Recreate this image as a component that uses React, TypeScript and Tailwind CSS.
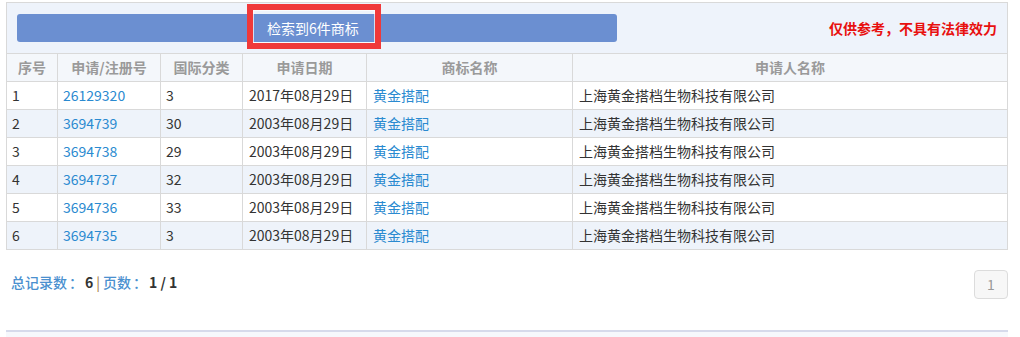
import { memo } from "react"

const rows = [
  { no: 1, reg: "26129320", cls: "3", date: "2017年08月29日" },
  { no: 2, reg: "3694739", cls: "30", date: "2003年08月29日" },
  { no: 3, reg: "3694738", cls: "29", date: "2003年08月29日" },
  { no: 4, reg: "3694737", cls: "32", date: "2003年08月29日" },
  { no: 5, reg: "3694736", cls: "33", date: "2003年08月29日" },
  { no: 6, reg: "3694735", cls: "3", date: "2003年08月29日" },
]

const heads = ["序号", "申请/注册号", "国际分类", "申请日期", "商标名称", "申请人名称"]

const ResultTable = memo(function ResultTable() {
  return (
    <table className="w-full table-fixed border-collapse text-[14px]">
      <colgroup>
        <col className="w-[51px]" />
        <col className="w-[103px]" />
        <col className="w-[82px]" />
        <col className="w-[124px]" />
        <col className="w-[206px]" />
        <col />
      </colgroup>
      <thead>
        <tr className="h-[28px] bg-[#f4f7fb]">
          {heads.map((h) => (
            <th key={h} className="border border-[#d9d9d9] px-[5px] text-center font-bold text-[#9a9a9a]">
              {h}
            </th>
          ))}
        </tr>
      </thead>
      <tbody>
        {rows.map((r) => (
          <tr key={r.no} className={`h-[28px] ${r.no % 2 === 0 ? "bg-[#eef3fa]" : "bg-white"}`}>
            <td className="border border-[#d9d9d9] px-[5px] text-[#333]">{r.no}</td>
            <td className="border border-[#d9d9d9] px-[5px] text-[#2a8ad0]">{r.reg}</td>
            <td className="border border-[#d9d9d9] px-[5px] text-[#333]">{r.cls}</td>
            <td className="border border-[#d9d9d9] px-[6px] text-[#333]">{r.date}</td>
            <td className="border border-[#d9d9d9] px-[6px] text-[#2a8ad0]">黄金搭配</td>
            <td className="border border-[#d9d9d9] px-[6px] text-[#333]">上海黄金搭档生物科技有限公司</td>
          </tr>
        ))}
      </tbody>
    </table>
  )
})

export default function App() {
  return (
    <div className="h-[337px] w-[1020px] overflow-hidden bg-white pl-[6px] pt-[2px] font-['Noto_Sans_CJK_SC',sans-serif]">
      <div className="w-[1002px]">
        <div className="relative flex h-[51px] items-center justify-between border-x border-t border-[#d9d9d9] bg-[#eef3fb] pl-[10px] pr-[10px]">
          <div className="flex h-[28px] w-[600px] items-center rounded-[3px] bg-[#6b8fd1]">
            <span className="ml-[250px] text-[14px] text-white">检索到6件商标</span>
          </div>
          <span className="text-[14px] font-bold text-[#e8100f]">仅供参考，不具有法律效力</span>
          <div className="absolute left-[240px] top-[1px] h-[45px] w-[134px] border-[6px] border-[#f0393a] shadow-[inset_0_0_0_1px_rgba(255,255,255,0.7)]" />
        </div>
        <ResultTable />
        <div className="flex h-[80px] items-start justify-between pt-[20px]">
          <div className="ml-[5px] mt-[2px] text-[14px] text-[#4a90cf]">
            <span className="font-medium">总记录数</span>
            <span className="mx-[2px] font-medium">：</span>
            <span className="font-bold text-[#333]">6</span>
            <span className="mx-[3px] text-[#a0703a]">|</span>
            <span className="font-medium">页数</span>
            <span className="mx-[2px] font-medium">：</span>
            <span className="font-bold text-[#333]">1 / 1</span>
          </div>
          <div className="flex h-[29px] w-[34px] items-center justify-center rounded-[4px] border border-[#dcdcdc] bg-[#f7f7f7] text-[14px] text-[#999]">
            1
          </div>
        </div>
        <div className="h-[2px] bg-[#d6daeb]" />
        <div className="h-[10px] bg-[#f6f8fc]" />
      </div>
    </div>
  )
}
